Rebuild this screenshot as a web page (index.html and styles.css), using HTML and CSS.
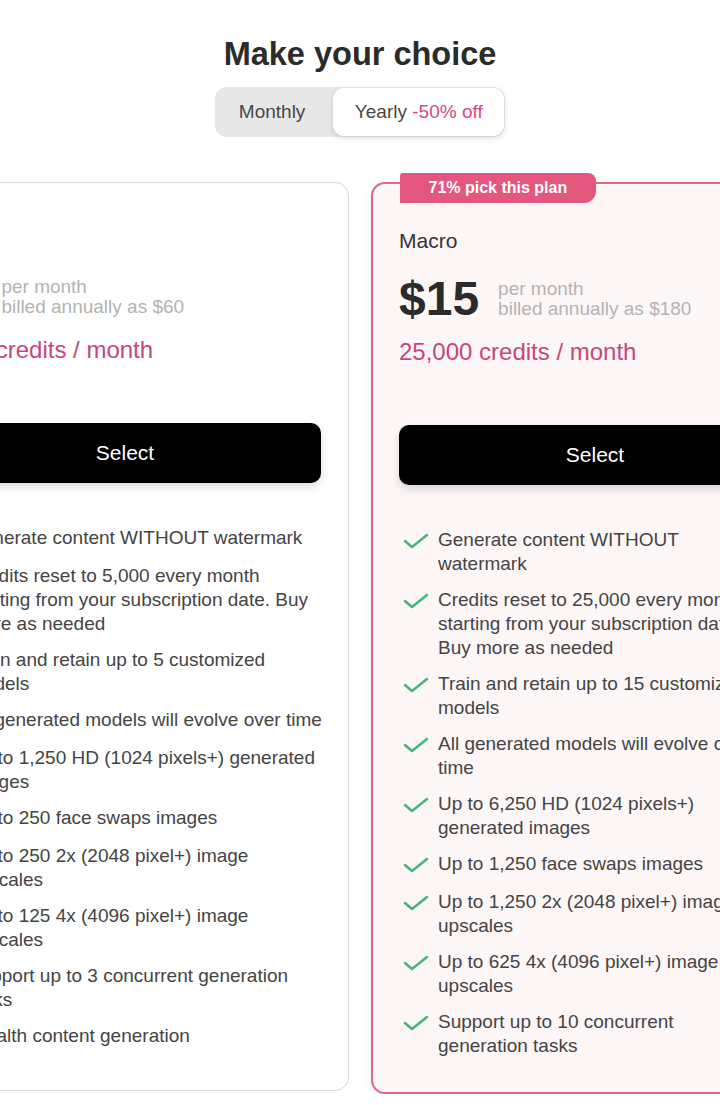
FILE: index.html
```html
<!DOCTYPE html>
<html lang="en">
<head>
<meta charset="utf-8">
<title>Make your choice</title>
<link rel="stylesheet" href="styles.css">
</head>
<body>
<main class="page">
  <h1 class="title">Make your choice</h1>
  <div class="toggle">
    <button class="toggle-opt monthly">Monthly</button>
    <button class="toggle-opt active">Yearly <span class="discount">-50% off</span></button>
  </div>

  <div class="plans">
    <section class="plan">
      <h2 class="plan-name">Micro</h2>
      <div class="price-row">
        <span class="price">$5</span>
        <div class="price-note"><div>per month</div><div>billed annually as $60</div></div>
      </div>
      <div class="credits">5,000 credits / month</div>
      <button class="select">Select</button>
      <ul class="features">
        <li><svg class="check" viewBox="0 0 30 26"><path d="M6 13l7 6L28 7"/></svg><span>Generate content WITHOUT watermark</span></li>
        <li><svg class="check" viewBox="0 0 30 26"><path d="M6 13l7 6L28 7"/></svg><span>Credits reset to 5,000 every month starting from your subscription date. Buy more as needed</span></li>
        <li><svg class="check" viewBox="0 0 30 26"><path d="M6 13l7 6L28 7"/></svg><span>Train and retain up to 5 customized models</span></li>
        <li><svg class="check" viewBox="0 0 30 26"><path d="M6 13l7 6L28 7"/></svg><span>All generated models will evolve over time</span></li>
        <li><svg class="check" viewBox="0 0 30 26"><path d="M6 13l7 6L28 7"/></svg><span>Up to 1,250 HD (1024 pixels+) generated images</span></li>
        <li><svg class="check" viewBox="0 0 30 26"><path d="M6 13l7 6L28 7"/></svg><span>Up to 250 face swaps images</span></li>
        <li><svg class="check" viewBox="0 0 30 26"><path d="M6 13l7 6L28 7"/></svg><span>Up to 250 2x (2048 pixel+) image upscales</span></li>
        <li><svg class="check" viewBox="0 0 30 26"><path d="M6 13l7 6L28 7"/></svg><span>Up to 125 4x (4096 pixel+) image upscales</span></li>
        <li><svg class="check" viewBox="0 0 30 26"><path d="M6 13l7 6L28 7"/></svg><span>Support up to 3 concurrent generation tasks</span></li>
        <li><svg class="check" viewBox="0 0 30 26"><path d="M6 13l7 6L28 7"/></svg><span>Stealth content generation</span></li>
      </ul>
    </section>

    <section class="plan featured">
      <div class="badge">71% pick this plan</div>
      <h2 class="plan-name">Macro</h2>
      <div class="price-row">
        <span class="price">$15</span>
        <div class="price-note"><div>per month</div><div>billed annually as $180</div></div>
      </div>
      <div class="credits">25,000 credits / month</div>
      <button class="select">Select</button>
      <ul class="features">
        <li><svg class="check" viewBox="0 0 30 26"><path d="M6 13l7 6L28 7"/></svg><span>Generate content WITHOUT watermark</span></li>
        <li><svg class="check" viewBox="0 0 30 26"><path d="M6 13l7 6L28 7"/></svg><span>Credits reset to 25,000 every month starting from your subscription date. Buy more as needed</span></li>
        <li><svg class="check" viewBox="0 0 30 26"><path d="M6 13l7 6L28 7"/></svg><span>Train and retain up to 15 customized models</span></li>
        <li><svg class="check" viewBox="0 0 30 26"><path d="M6 13l7 6L28 7"/></svg><span>All generated models will evolve over time</span></li>
        <li><svg class="check" viewBox="0 0 30 26"><path d="M6 13l7 6L28 7"/></svg><span>Up to 6,250 HD (1024 pixels+) generated images</span></li>
        <li><svg class="check" viewBox="0 0 30 26"><path d="M6 13l7 6L28 7"/></svg><span>Up to 1,250 face swaps images</span></li>
        <li><svg class="check" viewBox="0 0 30 26"><path d="M6 13l7 6L28 7"/></svg><span>Up to 1,250 2x (2048 pixel+) image upscales</span></li>
        <li><svg class="check" viewBox="0 0 30 26"><path d="M6 13l7 6L28 7"/></svg><span>Up to 625 4x (4096 pixel+) image upscales</span></li>
        <li><svg class="check" viewBox="0 0 30 26"><path d="M6 13l7 6L28 7"/></svg><span>Support up to 10 concurrent generation tasks</span></li>
      </ul>
    </section>
  </div>
</main>
</body>
</html>
```

FILE: styles.css
```css
html, body {
  margin: 0;
  padding: 0;
  background: #ffffff;
  overflow: hidden;
}

body {
  font-family: "Liberation Sans", Arial, sans-serif;
  color: #444444;
}

.page {
  width: 720px;
  display: flex;
  flex-direction: column;
  align-items: center;
}

.title {
  margin: 34px 0 13px;
  font-size: 32.5px;
  line-height: 40px;
  font-weight: 700;
  color: #2b2b2b;
}

.toggle {
  display: flex;
  padding: 1px;
  background: #e8e8e8;
  border-radius: 12px;
}

.toggle-opt {
  height: 48px;
  border: 0;
  background: transparent;
  font-family: inherit;
  font-size: 19px;
  color: #474747;
  border-radius: 11px;
  padding: 0 21.5px;
  cursor: pointer;
}

.toggle-opt.monthly {
  padding: 0 28px 0 23px;
}

.toggle-opt.active {
  background: #ffffff;
  box-shadow: 0 2px 6px rgba(0, 0, 0, 0.14);
}

.discount {
  color: #d24b7c;
}

.plans {
  width: 720px;
  margin-top: 45px;
  display: flex;
  justify-content: center;
  align-items: flex-start;
  gap: 22px;
}

.plan {
  position: relative;
  flex: 0 0 448px;
  box-sizing: border-box;
  background: #ffffff;
  border: 1px solid #d6d6d6;
  border-radius: 14px;
  padding: 42px 27px 40px;
}

.plan.featured {
  border: 2px solid #d86a8e;
  background: #fdf6f7;
  padding: 43px 26px 34px;
  box-shadow: 0 4px 10px rgba(0, 0, 0, 0.07);
}

.badge {
  position: absolute;
  top: -11px;
  left: 27px;
  height: 30px;
  line-height: 30px;
  padding: 0 28.5px;
  background: #e3567e;
  color: #ffffff;
  font-size: 16px;
  font-weight: 700;
  border-radius: 3px 8px 12px 0;
}

.plan-name {
  margin: 0 0 20px;
  font-size: 21px;
  line-height: 28px;
  font-weight: 400;
  color: #333333;
}

.price-row {
  display: flex;
  align-items: center;
  margin-bottom: 14px;
}

.price {
  font-size: 48px;
  line-height: 48px;
  font-weight: 700;
  color: #2b2b2b;
}

.price-note {
  margin-left: 19px;
  font-size: 19px;
  line-height: 20px;
  color: #b3b3b3;
}

.credits {
  font-size: 24px;
  line-height: 30px;
  color: #c8467a;
  margin-bottom: 58px;
}

.select {
  display: block;
  width: 100%;
  height: 60px;
  border: 0;
  border-radius: 10px;
  background: #000000;
  color: #ffffff;
  font-family: inherit;
  font-size: 21px;
  box-shadow: 0 4px 8px rgba(0, 0, 0, 0.14);
  margin-bottom: 43px;
  cursor: pointer;
}

.features {
  list-style: none;
  margin: 0 -3px 0 0;
  padding: 0;
  display: flex;
  flex-direction: column;
  gap: 12px;
}

.featured .features {
  padding-right: 35px;
}

.features li {
  display: flex;
  align-items: flex-start;
  gap: 9px;
  font-size: 19px;
  line-height: 24px;
  color: #444444;
}

.check {
  flex: 0 0 30px;
  width: 30px;
  height: 26px;
}

.check path {
  fill: none;
  stroke: #45b57a;
  stroke-width: 2.5;
  stroke-linecap: round;
  stroke-linejoin: round;
}
```
